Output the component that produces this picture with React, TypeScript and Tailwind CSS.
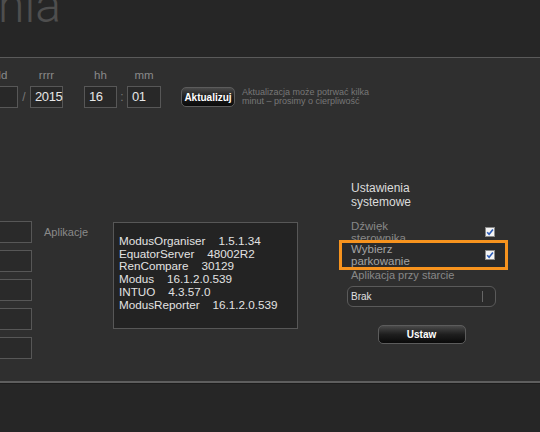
import React from "react";

const APPS = [
  ["ModusOrganiser", "1.5.1.34"],
  ["EquatorServer", "48002R2"],
  ["RenCompare", "30129"],
  ["Modus", "16.1.2.0.539"],
  ["INTUO", "4.3.57.0"],
  ["ModusReporter", "16.1.2.0.539"],
];

function Field({ label, value, width }: { label: string; value: string; width: string }) {
  return (
    <div className={`flex flex-col items-center shrink-0 ${width}`}>
      <span className="text-[11.5px] leading-[12px] h-[12px] text-[#8a8a8a]">{label}</span>
      <div className="mt-[5px] h-[22px] w-full border border-[#575757] bg-[#282828] pl-[4px] flex items-center text-[13px] tracking-[-0.4px] text-[#e6e6e6]">
        {value}
      </div>
    </div>
  );
}

function Check() {
  return (
    <svg width="10" height="10" viewBox="0 0 10 10" className="shrink-0">
      <rect x="0.5" y="0.5" width="9" height="9" fill="#f4f4f4" stroke="#8a8a8a" />
      <path d="M2.2 5.2 L4.1 7.3 L7.9 2.4" fill="none" stroke="#2c5cb8" strokeWidth="1.6" />
    </svg>
  );
}

function DarkButton({ children, className = "" }: { children: React.ReactNode; className?: string }) {
  return (
    <div
      className={`flex items-center justify-center rounded-[5px] border border-[#5c5c5c] bg-gradient-to-b from-[#4a4a4a] via-[#1e1e1e] to-[#0a0a0a] text-[10px] font-semibold text-white shrink-0 ${className}`}
    >
      {children}
    </div>
  );
}

export default function App() {
  return (
    <div className="w-[540px] h-[432px] overflow-hidden bg-[#262626] font-['Liberation_Sans',Arial,sans-serif]">
      {/* Header */}
      <div className="h-[57px] overflow-hidden bg-[#262626]">
        <div className="-mt-[18px] -ml-[2px] text-[48px] leading-[48px] font-light font-['Roboto',sans-serif] text-[#4e4e4e]">
          nia
        </div>
      </div>

      {/* Content */}
      <div className="h-[324px] border-t border-[#5a5a5a] bg-[#2f2f2f] pt-[11px] overflow-hidden">
        {/* Date row */}
        <div className="flex items-end -ml-[16px]">
          <Field label="dd" value="" width="w-[34px]" />
          <div className="w-[12px] h-[22px] flex items-center justify-center text-[12px] text-[#777]">/</div>
          <Field label="rrrr" value="2015" width="w-[33px]" />
          <div className="w-[21px] shrink-0" />
          <Field label="hh" value="16" width="w-[33px]" />
          <div className="w-[10px] h-[22px] flex items-center justify-center text-[12px] text-[#777]">:</div>
          <Field label="mm" value="01" width="w-[34px]" />
          <div className="h-[22px] flex items-center ml-[20px]">
            <DarkButton className="w-[54px] h-[20px]">Aktualizuj</DarkButton>
          </div>
          <div className="h-[22px] flex flex-col justify-center ml-[7px] text-[9px] leading-[9.5px] text-[#777] whitespace-nowrap">
            <span>Aktualizacja może potrwać kilka</span>
            <span>minut – prosimy o cierpliwość</span>
          </div>
        </div>

        {/* Main row */}
        <div className="flex items-start mt-[73px]">
          <div className="flex flex-col gap-[7px] w-[40px] -ml-[8px] mt-[40px] shrink-0">
            {[0, 1, 2, 3, 4].map((i) => (
              <div key={i} className="h-[22px] border border-[#575757] bg-[#2a2a2a]" />
            ))}
          </div>

          <div className="ml-[12px] mt-[45px] w-[69px] shrink-0 text-[11px] leading-[12px] text-[#8a8a8a]">
            Aplikacje
          </div>

          <div className="mt-[41px] w-[185px] h-[107px] shrink-0 border border-[#575757] bg-[#232323] pt-[12px] pl-[5px]">
            {APPS.map(([name, ver]) => (
              <div key={name} className="text-[11.7px] leading-[12.7px] text-[#e2e2e2] whitespace-pre">
                {name}
                {"    "}
                {ver}
              </div>
            ))}
          </div>

          <div className="ml-[49px] w-[149px] shrink-0 flex flex-col">
            <div className="pl-[4px] text-[12px] leading-[14px] text-[#dcdcdc]">
              Ustawienia
              <br />
              systemowe
            </div>

            <div className="mt-[11px] h-[23px] flex items-center justify-between pl-[4px] pr-[1px]">
              <span className="text-[11.5px] leading-[12px] text-[#888]">
                Dźwięk
                <br />
                sterownika
              </span>
              <Check />
            </div>

            <div className="relative h-[24px] flex items-center justify-between pl-[4px] pr-[1px]">
              <div className="absolute -left-[8px] -right-[12px] -top-[3px] -bottom-[3px] border-[3px] border-[#f7931e] bg-[#2a2a2a]" />
              <span className="relative text-[11.5px] leading-[12px] text-[#a3a3a3]">
                Wybierz
                <br />
                parkowanie
              </span>
              <span className="relative flex">
                <Check />
              </span>
            </div>

            <div className="mt-[2px] pl-[4px] text-[11px] leading-[12px] text-[#888] whitespace-nowrap">
              Aplikacja przy starcie
            </div>

            <div className="mt-[5px] h-[21px] rounded-[6px] border border-[#5a5a5a] bg-[#2b2b2b] flex items-center justify-between pl-[3px] pr-[12px]">
              <span className="text-[10px] text-[#e0e0e0]">Brak</span>
              <span className="w-px h-[11px] bg-[#666]" />
            </div>

            <DarkButton className="mt-[18px] mx-auto w-[88px] h-[19px]">Ustaw</DarkButton>
          </div>
        </div>
      </div>

      {/* Footer */}
      <div className="h-[2px] bg-[#5e5e5e]" />
      <div className="h-[1px] bg-[#1c1c1c]" />
      <div className="h-[48px] bg-[#262626]" />
    </div>
  );
}
